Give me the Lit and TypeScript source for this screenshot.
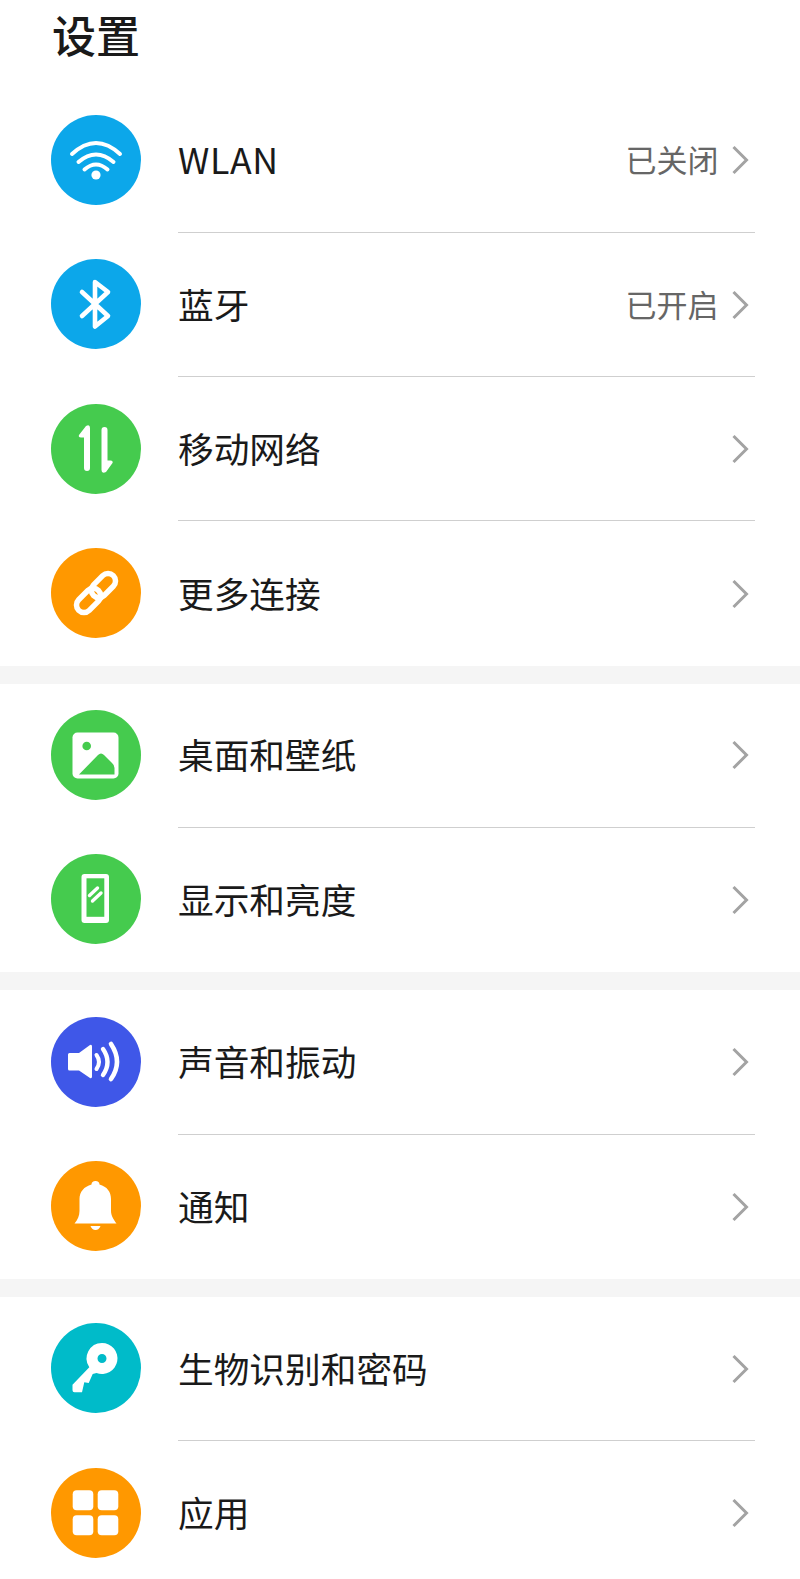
import { LitElement, html, svg, css } from "lit";
import { customElement } from "lit/decorators.js";

const G = "#45cb4e";
const icons: Record<string, unknown> = {
  wifi: svg`<g fill="none" stroke="#fff" stroke-width="4" stroke-linecap="round"><path d="M21 39Q45 17 69 39"/><path d="M27.500 47Q45 32 62.500 47"/><path d="M33.500 54.500Q45 44.500 56.500 54.500"/></g><circle cx="45" cy="60" r="4.600" fill="#fff"/>`,
  bt: svg`<path d="M31 33L57 57L44 67.500V23L57 33L31 57" fill="none" stroke="#fff" stroke-width="4.600" stroke-linecap="round" stroke-linejoin="round"/>`,
  data: svg`<path fill="#fff" d="M28 31L35 22Q39 20 39 24V64a3 3 0 0 1-6 0V33.500H30Q27 33 28 31Z"/><path fill="#fff" d="M61.500 59L55 68Q50.500 70 50.500 66V26a3 3 0 0 1 6 0V56.500H59.500Q62.500 57 61.500 59Z"/>`,
  link: svg`<g transform="rotate(-45 45 45)" fill="none" stroke="#fff" stroke-width="5.500"><rect x="20.500" y="37.500" width="28" height="15" rx="7.500"/><rect x="41.500" y="37.500" width="28" height="15" rx="7.500"/></g>`,
  image: svg`<rect x="21.500" y="22.500" width="46" height="46" rx="5" fill="#fff"/><circle cx="35.700" cy="36" r="4.300" fill="${G}"/><path fill="${G}" d="M28 64.500L47 45Q50 42 53 45L61 53Q63.500 55 63.500 58V64.500Z"/>`,
  phone: svg`<rect x="30.500" y="20" width="27.500" height="49" rx="3" fill="#fff"/><rect x="35.500" y="24.300" width="17.800" height="38.500" fill="${G}"/><path d="M46.500 34L38.500 41.500M50 39L41.500 47" stroke="#fff" stroke-width="3.400" stroke-linecap="round"/>`,
  sound: svg`<path fill="#fff" d="M18.500 36H28L39 28Q41 27 41 29.500V59.500Q41 62 39 61L28 53.500H18.500Q17 53.500 17 52V37.500Q17 36 18.500 36Z"/><g fill="none" stroke="#fff" stroke-linecap="round"><path stroke-width="4" d="M45.500 38Q50.500 45 45.500 52"/><path stroke-width="4.400" d="M52 32Q61 45 52 58"/><path stroke-width="4.600" d="M60 27Q72 45 60 62"/></g>`,
  bell: svg`<path fill="#fff" d="M44.500 20c2.500 0 4 1.500 4 3.500C56 25.500 60 31 60 38V50C60 55 63 59 65.500 62.500H23.500C26.500 59 28.500 55 28.500 50V38C28.500 31 33 25.500 40.500 23.500C40.500 21.500 42 20 44.500 20Z"/><path fill="#fff" d="M39.500 65H49.500Q48 69 44.500 69T39.500 65Z"/>`,
  key: svg`<path fill="#fff" fill-rule="evenodd" d="M51 20a15.500 15.500 0 1 1-5.500 30L41.700 51L37.700 60L33.300 59.300L31 69.300H23.500Q21.500 69.300 21.500 67.300V61.700L38.300 44.300A15.500 15.500 0 0 1 51 20ZM51 31a4.500 4.500 0 1 0 0 9a4.500 4.500 0 0 0 0-9Z"/>`,
  apps: svg`<g fill="#fff"><rect x="21.700" y="22.300" width="20.600" height="20" rx="4"/><rect x="46.700" y="22.300" width="20.600" height="20" rx="4"/><rect x="21.700" y="47.300" width="20.600" height="20" rx="4"/><rect x="46.700" y="47.300" width="20.600" height="20" rx="4"/></g>`,
};

type Row = { label: string; icon: string; color: string; status?: string };
const groups: Row[][] = [
  [
    { label: "WLAN", icon: "wifi", color: "blue", status: "已关闭" },
    { label: "蓝牙", icon: "bt", color: "blue", status: "已开启" },
    { label: "移动网络", icon: "data", color: "green" },
    { label: "更多连接", icon: "link", color: "orange" },
  ],
  [
    { label: "桌面和壁纸", icon: "image", color: "green" },
    { label: "显示和亮度", icon: "phone", color: "green" },
  ],
  [
    { label: "声音和振动", icon: "sound", color: "indigo" },
    { label: "通知", icon: "bell", color: "orange" },
  ],
  [
    { label: "生物识别和密码", icon: "key", color: "teal" },
    { label: "应用", icon: "apps", color: "orange" },
  ],
];

@customElement("app-root")
export class AppRoot extends LitElement {
  static styles = css`
    :host {
      display: block;
      width: 800px;
      height: 1579px;
      overflow: hidden;
      background: #fff;
      font-family: "Noto Sans CJK SC", "Noto Sans", sans-serif;
      color: #1a1a1a;
    }
    .title {
      height: 88.600px;
      box-sizing: border-box;
      padding: 3px 0 0 52px;
      font-size: 44px;
      line-height: 62px;
      font-weight: 500;
    }
    .group + .group {
      border-top: 18px solid #f5f5f5;
    }
    .row {
      height: 144.300px;
      display: flex;
      align-items: center;
      box-sizing: border-box;
      padding-left: 51px;
    }
    .circle {
      width: 90px;
      height: 90px;
      border-radius: 50%;
      flex: none;
      margin-bottom: 1.200px;
    }
    .group + .group .circle {
      margin-bottom: 2px;
    }
    .group:last-child .row:last-child .circle {
      margin-bottom: 0;
    }
    .circle svg {
      display: block;
      width: 90px;
      height: 90px;
    }
    .blue { background: #0ca7ea; }
    .green { background: #45cb4e; }
    .orange { background: #ff9800; }
    .indigo { background: #3f57e8; }
    .teal { background: #00bbc9; }
    .body {
      flex: 1;
      align-self: stretch;
      margin-left: 37px;
      margin-right: 45px;
      display: flex;
      align-items: center;
      box-sizing: border-box;
      border-bottom: 1px solid #cfcfcf;
    }
    .row:last-child .body {
      border-bottom: none;
    }
    .label {
      flex: 1;
      font-size: 35.700px;
      line-height: 50px;
      padding-bottom: 2px;
    }
    .latin {
      letter-spacing: 0.600px;
    }
    .status {
      font-size: 31px;
      line-height: 44px;
      color: #666;
      margin-right: 12.500px;
      padding-bottom: 2px;
    }
    .chev {
      display: block;
      width: 18px;
      height: 30px;
      margin-right: 6px;
    }
  `;

  render() {
    return html`
      <div class="title">设置</div>
      ${groups.map(
        (g) => html`<div class="group">
          ${g.map(
            (r) => html`<div class="row">
              <div class="circle ${r.color}">
                <svg viewBox="0 0 90 90">${icons[r.icon]}</svg>
              </div>
              <div class="body">
                <div class="label ${r.status === "已关闭" ? "latin" : ""}">${r.label}</div>
                ${r.status ? html`<div class="status">${r.status}</div>` : ""}
                <svg class="chev" viewBox="0 0 18 30">
                  <path d="M2.500 2L15.500 15L2.500 28" fill="none" stroke="#a3a3a3" stroke-width="3"/>
                </svg>
              </div>
            </div>`
          )}
        </div>`
      )}
    `;
  }
}
